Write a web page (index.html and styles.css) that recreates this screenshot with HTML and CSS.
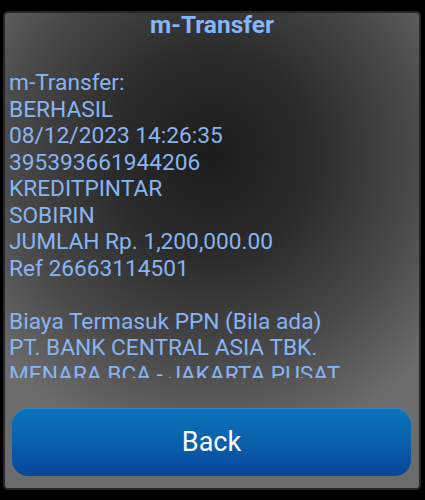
FILE: index.html
```html
<!DOCTYPE html>
<html>

<head>
  <title>m-Transfer</title>
  <link rel="stylesheet" href="styles.css">
</head>

<body>
  <div class="frame">
    <h1 class="title">m-Transfer</h1>

    <div class="message">
      <p>m-Transfer:</p>
      <p>BERHASIL</p>
      <p>08/12/2023 14:26:35</p>
      <p>395393661944206</p>
      <p>KREDITPINTAR</p>
      <p>SOBIRIN</p>
      <p>JUMLAH Rp. 1,200,000.00</p>
      <p>Ref 26663114501</p>
      <p>&nbsp;</p>
      <p>Biaya Termasuk PPN (Bila ada)</p>
      <p>PT. BANK CENTRAL ASIA TBK.</p>
      <p>MENARA BCA - JAKARTA PUSAT</p>
      <p>&nbsp;</p>
    </div>

    <button class="back">Back</button>
  </div>
</body>

</html>
```

FILE: styles.css
```css
html,
body {
  margin: 0;
  background-color: #000000;
  font-family: Roboto, "Liberation Sans", sans-serif;
}

.frame {
  margin: 11px 4px 0 3px;
  height: 475px;
  border: 2px solid #262626;
  border-radius: 5px;
  display: flex;
  flex-direction: column;
  background: radial-gradient(ellipse 70% 62% at 50% 30%, #1c1c1c 0%, #2c2c2c 35%, #4a4a4a 70%, #6c6c6c 100%);
}

.title {
  margin: 0;
  font-size: 24.5px;
  line-height: 24px;
  font-weight: bold;
  text-align: center;
  color: #86b6f6;
}

.message {
  margin-top: 33px;
  height: 308px;
  padding-left: 4px;
  overflow: hidden;
  font-size: 22.7px;
  line-height: 26.5px;
  color: #8ab4f0;
}

.message p {
  margin: 0;
  white-space: nowrap;
}

.back {
  margin: 30px 8px 12px 7px;
  height: 68px;
  border: none;
  border-radius: 16px;
  font-family: Roboto, "Liberation Sans", sans-serif;
  font-size: 27px;
  color: #ffffff;
  background: linear-gradient(to bottom, #0b74bb 0%, #0a63ad 45%, #07469b 100%);
  box-shadow: inset 0 1px 0 rgba(255, 255, 255, 0.15);
}
```
